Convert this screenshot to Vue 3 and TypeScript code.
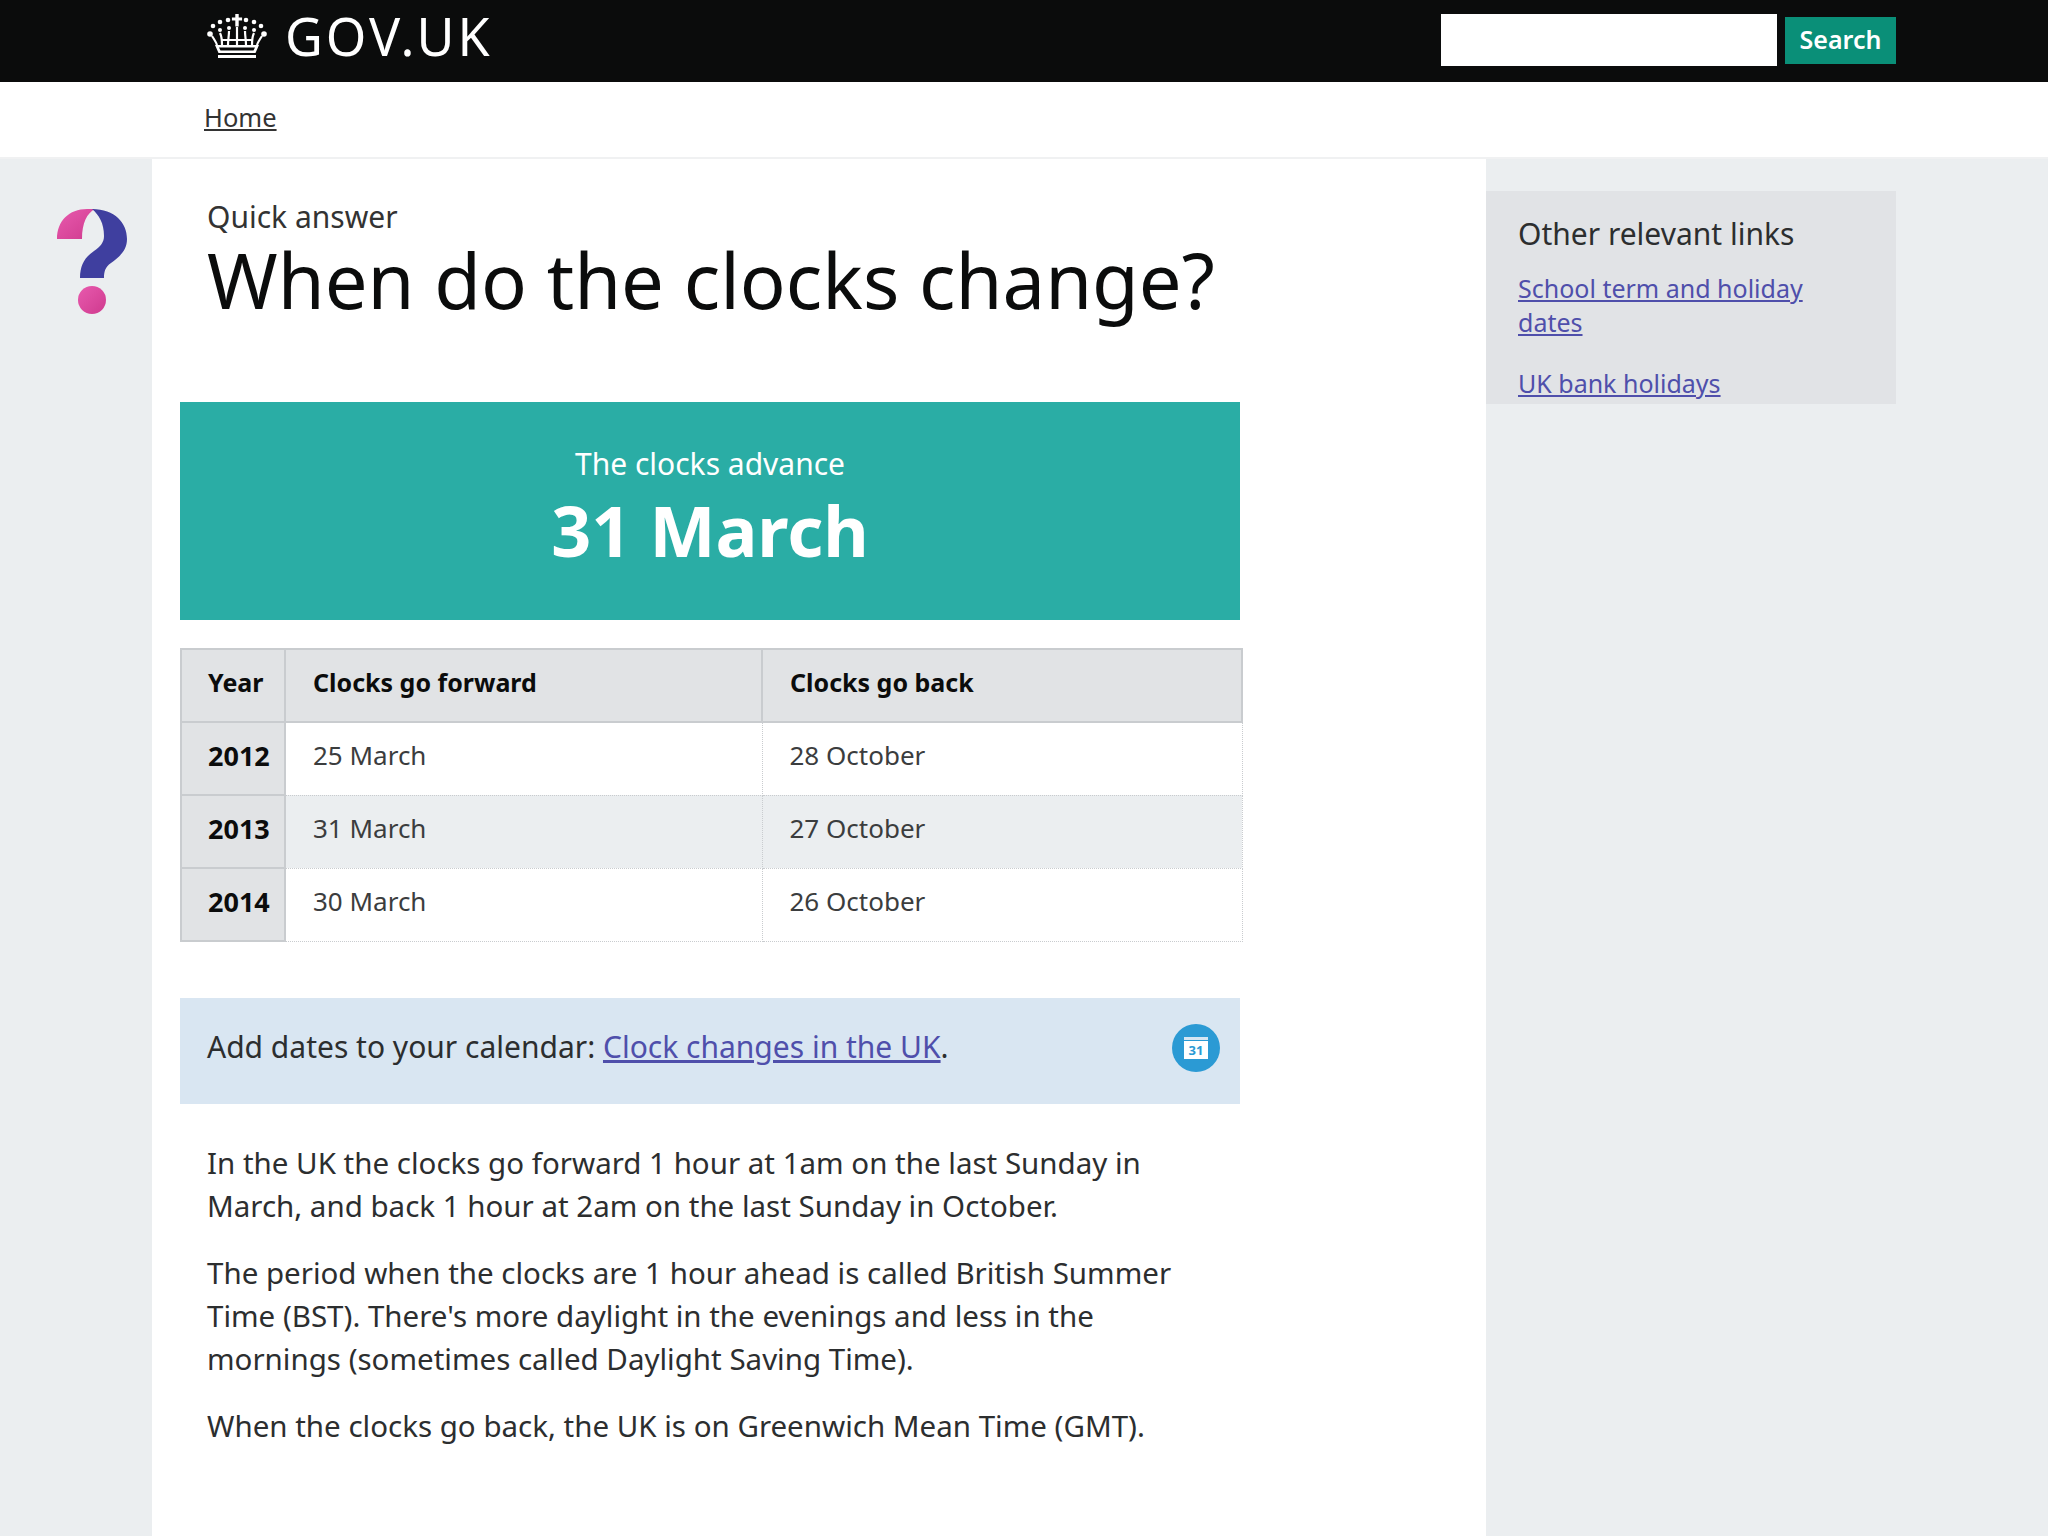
<template>
  <div class="page">
    <header class="topbar">
      <div class="logo">
        <svg class="crown" viewBox="0 0 60 44" width="60" height="44" aria-hidden="true">
          <g fill="#fff">
            <path d="M28.300 0h3.400v3.600h3.400v3h-3.400v6h-3.400v-6h-3.400v-3h3.400z" />
            <circle cx="21" cy="6" r="2.300" /><circle cx="39" cy="6" r="2.300" />
            <circle cx="13" cy="8" r="2.300" /><circle cx="47" cy="8" r="2.300" />
            <circle cx="6" cy="12" r="2.300" /><circle cx="54" cy="12" r="2.300" />
            <circle cx="3" cy="20" r="2.800" /><circle cx="57" cy="20" r="2.800" />
            <circle cx="22" cy="14" r="2" /><circle cx="38" cy="14" r="2" />
            <circle cx="13" cy="16" r="2" /><circle cx="47" cy="16" r="2" />
            <path d="M8 31h44l-3.500 8h-37zM12 33.500l1.500 3h33l1.500-3z" fill-rule="evenodd" />
            <path d="M11 41h38v3H11z" />
          </g>
          <g fill="none" stroke="#fff" stroke-width="2.200">
            <path d="M30 13v18M22 17c0 5-1 9-1 14M38 17c0 5 1 9 1 14M13 19c2 4 2 8 2 12M47 19c-2 4-2 8-2 12" />
            <path d="M5 22c2 3 4 6 5 9M55 22c-2 3-4 6-5 9M15 26h30" />
          </g>
        </svg>
        <span class="logotype">GOV.UK</span>
      </div>
      <form class="search" @submit.prevent>
        <input class="search-input" type="text" aria-label="Search" />
        <button class="search-btn" type="submit">Search</button>
      </form>
    </header>

    <nav class="crumbs"><a href="#">Home</a></nav>

    <div class="columns">
      <div class="rail">
        <svg class="qmark" viewBox="0 0 72 105" width="72" height="105" aria-hidden="true">
          <defs>
            <linearGradient id="pink" x1="0" y1="0" x2="1" y2="1">
              <stop offset="0" stop-color="#e85aae" />
              <stop offset="1" stop-color="#cf3a8e" />
            </linearGradient>
          </defs>
          <path d="M0 30C0 12 12 0 30 0h8C30 4 25 14 25 30z" fill="url(#pink)" />
          <path d="M35 0C58 0 70 14 70 30 70 42 62 48 54 54 48 58 47 63 47 69H23C23 56 28 48 37 42 44 37 47 33 47 27 47 14 42 6 35 0z" fill="#3f3f9f" />
          <ellipse cx="35" cy="91" rx="14" ry="14" fill="url(#pink)" />
        </svg>
      </div>

      <main class="main">
        <div class="title-block">
          <p class="kicker">Quick answer</p>
          <h1 class="title">When do the clocks change?</h1>
        </div>

        <section class="answer">
          <p class="answer-label">The clocks advance</p>
          <p class="answer-date">31 March</p>
        </section>

        <table class="dates">
          <thead>
            <tr>
              <th class="col-year">Year</th>
              <th class="col-date">Clocks go forward</th>
              <th>Clocks go back</th>
            </tr>
          </thead>
          <tbody>
            <tr v-for="(row, i) in rows" :key="row.year" :class="{ odd: i % 2 === 1 }">
              <th>{{ row.year }}</th>
              <td>{{ row.forward }}</td>
              <td>{{ row.back }}</td>
            </tr>
          </tbody>
        </table>

        <div class="calendar">
          <p>Add dates to your calendar: <a href="#">Clock changes in the UK</a>.</p>
          <svg class="cal-icon" viewBox="0 0 48 48" width="48" height="48" aria-hidden="true">
            <circle cx="24" cy="24" r="24" fill="#2b9ad4" />
            <path d="M12 13h24v3H12z" fill="#d5e6f3" />
            <path d="M12 17h24v18H12z" fill="#fff" />
            <text x="24" y="31" text-anchor="middle" class="cal-num">31</text>
          </svg>
        </div>

        <div class="body-copy">
          <p>In the UK the clocks go forward 1 hour at 1am on the last Sunday in March, and back 1 hour at 2am on the last Sunday in October.</p>
          <p>The period when the clocks are 1 hour ahead is called British Summer Time (BST). There's more daylight in the evenings and less in the mornings (sometimes called Daylight Saving Time).</p>
          <p>When the clocks go back, the UK is on Greenwich Mean Time (GMT).</p>
        </div>
      </main>

      <aside class="side">
        <div class="related">
          <h2>Other relevant links</h2>
          <ul>
            <li><a href="#">School term and holiday dates</a></li>
            <li><a href="#">UK bank holidays</a></li>
          </ul>
        </div>
      </aside>
    </div>
  </div>
</template>

<script setup lang="ts">
interface Row {
  year: number;
  forward: string;
  back: string;
}

const rows: Row[] = [
  { year: 2012, forward: '25 March', back: '28 October' },
  { year: 2013, forward: '31 March', back: '27 October' },
  { year: 2014, forward: '30 March', back: '26 October' },
];
</script>

<style>
html,
body {
  margin: 0;
  background: #ebeef0;
}
</style>

<style scoped>
.page {
  width: 2048px;
  height: 1536px;
  overflow: hidden;
  font-family: "Noto Sans", "Liberation Sans", sans-serif;
  color: #2c2e2f;
  background: #ebeef0;
}

p,
h1,
h2,
ul {
  margin: 0;
  padding: 0;
}

.topbar {
  height: 82px;
  box-sizing: border-box;
  background: #0b0c0c;
  padding: 14px 152px 0 207px;
  display: flex;
  justify-content: space-between;
  align-items: flex-start;
}

.logo {
  display: flex;
  align-items: center;
  gap: 18px;
  height: 48px;
  color: #fff;
}

.crown {
  margin-top: -4px;
}

.logotype {
  font-size: 52px;
  line-height: 44px;
  font-weight: 400;
  letter-spacing: 3px;
  margin-top: -5px;
}

.search {
  display: flex;
  align-items: center;
  gap: 8px;
}

.search-input {
  width: 336px;
  height: 52px;
  box-sizing: border-box;
  border: 0;
  background: #fff;
  padding: 0;
}

.search-btn {
  width: 111px;
  height: 47px;
  border: 0;
  padding: 0 0 2px;
  background: #0a8f78;
  color: #fff;
  font: 600 25px "Noto Sans", sans-serif;
}

.crumbs {
  height: 77px;
  box-sizing: border-box;
  background: #fff;
  border-bottom: 2px solid #f0f1f2;
  padding: 17px 0 0 204px;
  font-size: 25.500px;
  line-height: 36px;
}

.crumbs a {
  color: #333;
}

.columns {
  display: flex;
  height: 1377px;
}

.rail {
  width: 152px;
  padding: 50px 0 0 57px;
  box-sizing: border-box;
  flex: none;
}

.main {
  width: 1334px;
  flex: none;
  box-sizing: border-box;
  background: #fff;
  padding: 0 0 0 28px;
}

.title-block {
  padding: 37px 0 0 27px;
  height: 243px;
  box-sizing: border-box;
}

.kicker {
  font-size: 30px;
  line-height: 42px;
  color: #333;
}

.title {
  font-size: 76px;
  line-height: 84px;
  font-weight: 400;
  color: #0b0c0c;
}

.answer {
  width: 1060px;
  height: 218px;
  box-sizing: border-box;
  background: #2aada5;
  color: #fff;
  text-align: center;
  padding-top: 38px;
}

.answer-label {
  font-size: 30px;
  line-height: 47px;
}

.answer-date {
  font-size: 70px;
  line-height: 86px;
  font-weight: 700;
}

.dates {
  width: 1063px;
  margin-top: 28px;
  border-collapse: collapse;
  table-layout: fixed;
  font-size: 26px;
}

.dates th,
.dates td {
  height: 73px;
  box-sizing: border-box;
  padding: 0 0 7px 27px;
  text-align: left;
  border: 2px solid #c9cccf;
}

.dates th {
  background: #e1e3e5;
  color: #0b0c0c;
  font-weight: 700;
  font-size: 27px;
}

.dates thead th {
  font-size: 25px;
}

.dates .col-year,
.dates tbody th {
  padding-left: 26px;
}

.dates td {
  background: #fff;
  color: #3b3d3e;
  border: 1px dotted #c9cccf;
}

.dates .odd td {
  background: #ebeef0;
}

.col-year {
  width: 104px;
}

.col-date {
  width: 477px;
}

.calendar {
  width: 1060px;
  height: 106px;
  margin-top: 56px;
  box-sizing: border-box;
  background: #d9e6f2;
  padding: 28px 20px 0 27px;
  display: flex;
  justify-content: space-between;
  align-items: flex-start;
  font-size: 30px;
  line-height: 42px;
}

.cal-icon {
  margin-top: -2px;
}

.calendar a,
.related a {
  color: #4f4fab;
}

.cal-num {
  font-size: 13px;
  font-weight: 700;
  fill: #2b9ad4;
}

.body-copy {
  width: 1008px;
  padding: 37px 0 0 27px;
  font-size: 29.500px;
  line-height: 43px;
  color: #2c2e2f;
}

.body-copy p + p {
  margin-top: 24px;
}

.side {
  flex: none;
  padding-top: 32px;
}

.related {
  width: 410px;
  height: 213px;
  box-sizing: border-box;
  background: #e1e3e6;
  padding: 22px 30px 0 32px;
}

.related h2 {
  font-size: 30px;
  line-height: 42px;
  font-weight: 400;
  color: #2c2e2f;
}

.related ul {
  list-style: none;
  margin-top: 16px;
  font-size: 25px;
  line-height: 34px;
}

.related li + li {
  margin-top: 27px;
}
</style>
